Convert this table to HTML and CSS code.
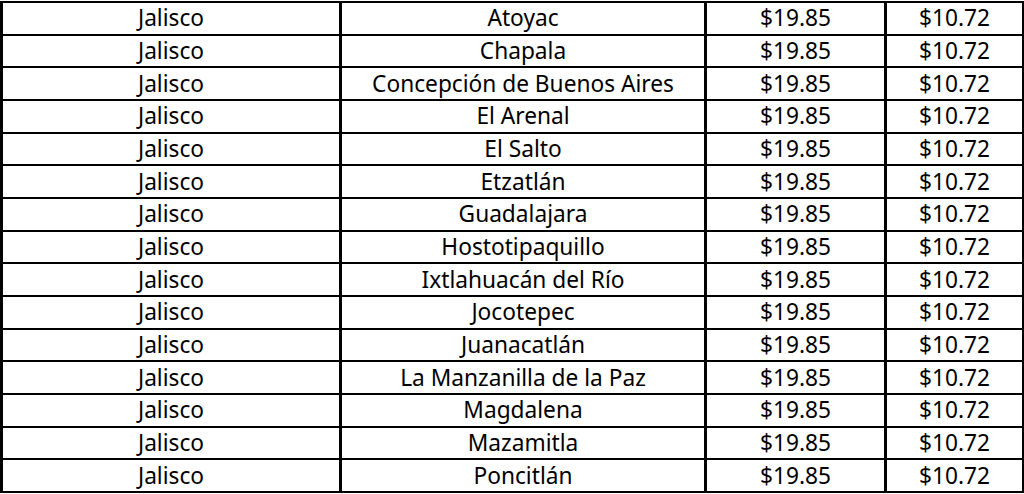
FILE: index.html
```html
<!DOCTYPE html>
<html lang="es">
<head>
<meta charset="utf-8">
<title>Tarifas Jalisco</title>
<link rel="stylesheet" href="styles.css">
</head>
<body>
<table class="tabla">
  <colgroup>
    <col class="c-estado">
    <col class="c-municipio">
    <col class="c-precio">
    <col class="c-precio2">
  </colgroup>
  <tbody>
    <tr><td>Jalisco</td><td>Atoyac</td><td>$19.85</td><td>$10.72</td></tr>
    <tr><td>Jalisco</td><td>Chapala</td><td>$19.85</td><td>$10.72</td></tr>
    <tr><td>Jalisco</td><td>Concepción de Buenos Aires</td><td>$19.85</td><td>$10.72</td></tr>
    <tr><td>Jalisco</td><td>El Arenal</td><td>$19.85</td><td>$10.72</td></tr>
    <tr><td>Jalisco</td><td>El Salto</td><td>$19.85</td><td>$10.72</td></tr>
    <tr><td>Jalisco</td><td>Etzatlán</td><td>$19.85</td><td>$10.72</td></tr>
    <tr><td>Jalisco</td><td>Guadalajara</td><td>$19.85</td><td>$10.72</td></tr>
    <tr><td>Jalisco</td><td>Hostotipaquillo</td><td>$19.85</td><td>$10.72</td></tr>
    <tr><td>Jalisco</td><td>Ixtlahuacán del Río</td><td>$19.85</td><td>$10.72</td></tr>
    <tr><td>Jalisco</td><td>Jocotepec</td><td>$19.85</td><td>$10.72</td></tr>
    <tr><td>Jalisco</td><td>Juanacatlán</td><td>$19.85</td><td>$10.72</td></tr>
    <tr><td>Jalisco</td><td>La Manzanilla de la Paz</td><td>$19.85</td><td>$10.72</td></tr>
    <tr><td>Jalisco</td><td>Magdalena</td><td>$19.85</td><td>$10.72</td></tr>
    <tr><td>Jalisco</td><td>Mazamitla</td><td>$19.85</td><td>$10.72</td></tr>
    <tr><td>Jalisco</td><td>Poncitlán</td><td>$19.85</td><td>$10.72</td></tr>
  </tbody>
</table>
</body>
</html>
```

FILE: styles.css
```css
html, body {
  margin: 0;
  padding: 0;
  background: #ffffff;
  overflow: hidden;
}

.tabla {
  border-collapse: collapse;
  table-layout: fixed;
  width: 1022px;
  margin-top: 1px;
  font-family: "Noto Sans", "Open Sans", sans-serif;
  font-size: 22.7px;
  color: #000000;
}

.c-estado { width: 339px; }
.c-municipio { width: 365px; }
.c-precio { width: 180px; }
.c-precio2 { width: 138px; }

.tabla tr {
  height: 32.67px;
}

.tabla td {
  border-top: 2px solid #000000;
  border-bottom: 2px solid #000000;
  border-left: 3px solid #000000;
  border-right: 3px solid #000000;
  padding: 0 4px;
  text-align: center;
  vertical-align: middle;
  line-height: 28px;
  white-space: nowrap;
  overflow: hidden;
}
```
